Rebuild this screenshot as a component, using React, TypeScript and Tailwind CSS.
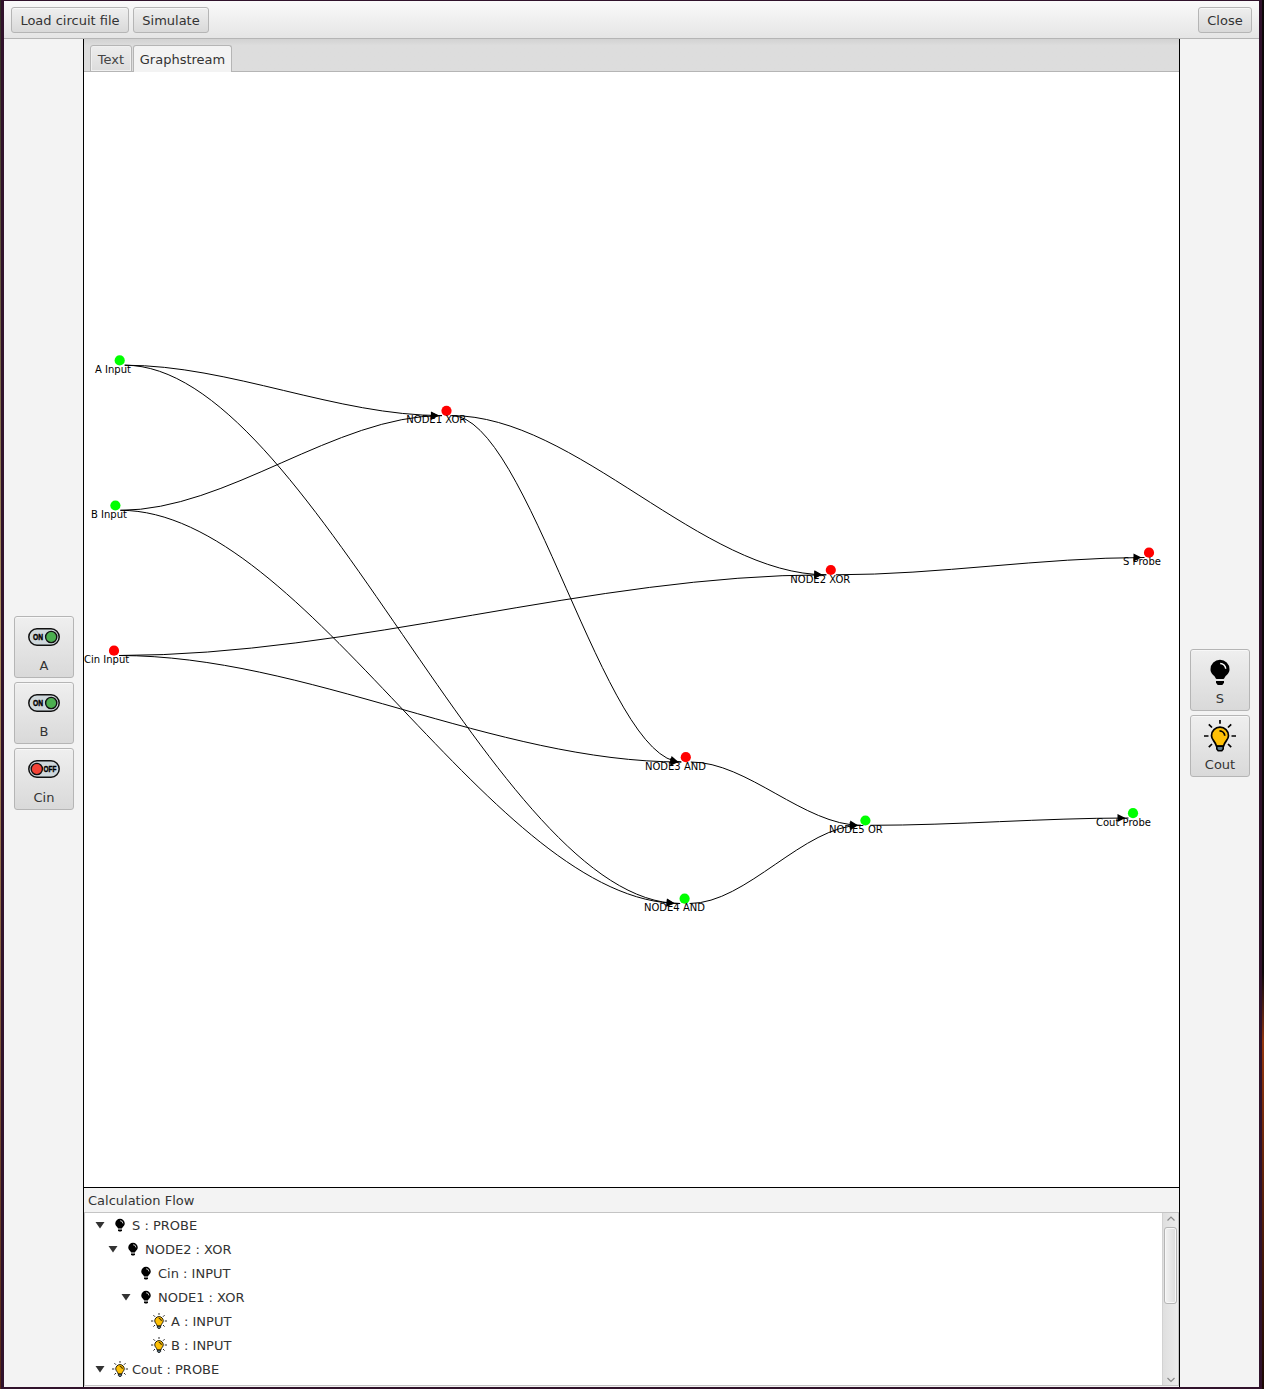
import React from "react";

type GraphNode = { id: string; label: string; x: number; y: number; tx: number; ty: number; on: boolean; gap?: number };

const nodes: GraphNode[] = [
  { id: "A", label: "A Input", x: 119.7, y: 360.4, tx: 95, ty: 373, on: true },
  { id: "B", label: "B Input", x: 115.4, y: 505.5, tx: 91, ty: 518, on: true },
  { id: "Cin", label: "Cin Input", x: 114, y: 650.7, tx: 84, ty: 663, on: false },
  { id: "N1", label: "NODE1 XOR", x: 446.5, y: 410.8, tx: 406.3, ty: 423, on: false },
  { id: "N2", label: "NODE2 XOR", x: 830.8, y: 570, tx: 790.3, ty: 583, on: false, gap: 4 },
  { id: "N3", label: "NODE3 AND", x: 685.8, y: 757.2, tx: 645, ty: 770, on: false },
  { id: "N4", label: "NODE4 AND", x: 684.6, y: 898.7, tx: 644, ty: 911, on: true, gap: 5.5 },
  { id: "N5", label: "NODE5 OR", x: 865.4, y: 820.5, tx: 829, ty: 833, on: true },
  { id: "S", label: "S Probe", x: 1149, y: 552.7, tx: 1123, ty: 565, on: false },
  { id: "Cout", label: "Cout Probe", x: 1133, y: 813.2, tx: 1096, ty: 826, on: true },
];

const edges: [string, string][] = [
  ["A", "N1"], ["B", "N1"], ["A", "N4"], ["B", "N4"], ["Cin", "N2"], ["Cin", "N3"],
  ["N1", "N2"], ["N1", "N3"], ["N2", "S"], ["N3", "N5"], ["N4", "N5"], ["N5", "Cout"],
];

function Edge({ from, to }: { from: GraphNode; to: GraphNode }) {
  const x0 = from.x + 5, y0 = from.y + 4.8;
  const x1 = to.x - 4.5, y1 = to.y + 4.8;
  const third = (x1 - x0) / 3;
  const tipX = x1 - (to.gap ?? 3);
  // Height of the curve at a given x, since x grows linearly along it.
  const at = (x: number) => {
    const t = (x - x0) / (x1 - x0);
    return y0 + (y1 - y0) * (3 * t * t - 2 * t * t * t);
  };
  const tipY = at(tipX);
  const angle = (Math.atan2(tipY - at(tipX - 8), 8) * 180) / Math.PI;
  return (
    <g>
      <path d={`M${x0} ${y0}C${x0 + third} ${y0} ${x1 - third} ${y1} ${x1} ${y1}`} fill="none" stroke="#000" strokeWidth="1" />
      <path d="M0 0L-8 -4V4Z" transform={`translate(${tipX} ${tipY}) rotate(${angle})`} />
    </g>
  );
}

function Graph() {
  const find = (id: string) => nodes.find((n) => n.id === id)!;
  return (
    <svg className="block h-[1115px] w-[1095px] bg-white" viewBox="84 72 1095 1115">
      {edges.map(([a, b]) => <Edge key={a + b} from={find(a)} to={find(b)} />)}
      {nodes.map((n) => <circle key={n.id} cx={n.x} cy={n.y} r="5.1" fill={n.on ? "#00ff00" : "#ff0000"} />)}
      {nodes.map((n) => <text key={n.id} x={n.tx} y={n.ty} className="text-[10px]">{n.label}</text>)}
    </svg>
  );
}

function Bulb({ on, className }: { on: boolean; className: string }) {
  return (
    <svg viewBox="0 0 32 32" className={className}>
      {on ? (
        <>
          <path d="M16 0v3.800M4.800 4.300l3.200 3.200M27.200 4.300l-3.200 3.200M0 16h4.500M27.500 16H32M4.800 27.200l3.200-3.200M27.200 27.200l-3.200-3.200" stroke="#000" strokeWidth="1.700" />
          <path d="M16 7.200a8.500 8.500 0 0 0-8.500 8.500c0 4.200 3.800 5.500 4.900 10.300h7.200c1.100-4.800 4.900-6.100 4.900-10.300A8.500 8.500 0 0 0 16 7.200Z" fill="#ffc107" stroke="#000" strokeWidth="1.700" />
          <path d="M15.500 10.800a5.400 5.400 0 0 1 5.300 5" fill="none" stroke="#000" strokeWidth="1.700" />
          <path d="M12.800 26.300h6.400v2.700l-1.400 1.800h-3.600l-1.400-1.800Z" fill="#607d8b" stroke="#000" strokeWidth="1.600" />
        </>
      ) : (
        <>
          <path d="M16 3.700a9.500 9.500 0 0 0-9.500 9.500c0 4 2.700 5.500 4.200 7.200 1 1.200.9 2.600 2 2.600h6.600c1.100 0 1-1.400 2-2.600 1.500-1.700 4.200-3.200 4.200-7.200A9.500 9.500 0 0 0 16 3.700Z" />
          <path d="M16.200 7.500a5.500 5.500 0 0 1 5.500 5.300" fill="none" stroke="#fff" strokeWidth="1.500" />
          <path d="M12 25h8v1.800l-1.700 2.200h-4.600L12 26.800Z" />
        </>
      )}
    </svg>
  );
}

function Toggle({ on }: { on: boolean }) {
  return (
    <svg viewBox="0 0 32 32" className="size-8">
      <rect x=".8" y="7.800" width="30.400" height="16.400" rx="8.200" fill="#cfd8dc" stroke="#111" strokeWidth="1.500" />
      <circle cx={on ? 23.2 : 8.8} cy="16" r="5.600" fill={on ? "#4caf50" : "#f44336"} stroke="#111" strokeWidth="1.400" />
      <text x={on ? 5 : 15.5} y="19.400" textLength={on ? 10 : 12.8} lengthAdjust="spacingAndGlyphs" stroke="#000" strokeWidth=".5" className="text-[9.500px] font-bold [font-family:'Liberation_Sans',sans-serif]">
        {on ? "ON" : "OFF"}
      </text>
    </svg>
  );
}

const face = "rounded-[3px] border border-[#b5b5b5] bg-linear-to-b from-[#efefef] to-[#d9d9d9] shadow-[inset_0_1px_#f8f8f8]";

function BarButton({ children, className }: { children: React.ReactNode; className: string }) {
  return <button className={`flex h-[26px] items-center justify-center pt-0.5 whitespace-nowrap ${face} ${className}`}>{children}</button>;
}

function SideButton({ label, children }: { label: string; children: React.ReactNode }) {
  return (
    <button className={`flex h-[62px] w-[60px] flex-col items-center pt-1 ${face}`}>
      {children}
      <span className="mt-1 leading-[17px]">{label}</span>
    </button>
  );
}

const rows: { text: string; depth: number; on: boolean; open: boolean }[] = [
  { text: "S : PROBE", depth: 0, on: false, open: true },
  { text: "NODE2 : XOR", depth: 1, on: false, open: true },
  { text: "Cin : INPUT", depth: 2, on: false, open: false },
  { text: "NODE1 : XOR", depth: 2, on: false, open: true },
  { text: "A : INPUT", depth: 3, on: true, open: false },
  { text: "B : INPUT", depth: 3, on: true, open: false },
  { text: "Cout : PROBE", depth: 0, on: true, open: true },
  { text: "", depth: 1, on: true, open: true },
];

function Tree() {
  return (
    <div className="flex h-[174px] border border-[#c4c4c4] bg-white">
      <div className="flex-1 overflow-hidden">
        {rows.map((r, i) => (
          <div key={i} className="flex h-6 items-center" style={{ paddingLeft: 10 + r.depth * 13 }}>
            <svg viewBox="0 0 10 8" className="h-2 w-[10px]">{r.open && <path d="M.5 1h9L5 7.500Z" fill="#333" />}</svg>
            <Bulb on={r.on} className="ml-[7px] size-4" />
            <span className="mt-0.5 ml-1 whitespace-nowrap">{r.text}</span>
          </div>
        ))}
      </div>
      <div className="flex w-4 flex-col items-center border-l border-[#d2d2d2] bg-linear-to-r from-[#dfdfdf] to-[#ececec]">
        <svg viewBox="0 0 10 14" className="h-[14px] w-[10px] shrink-0"><path d="M1.500 7.500L5 4l3.500 3.500" fill="none" stroke="#888" strokeWidth="1.200" /></svg>
        <div className="h-[77px] w-[13px] shrink-0 rounded-[3px] border border-[#b5b5b5] bg-linear-to-r from-[#f2f2f2] to-[#dcdcdc] shadow-[inset_0_0_0_1px_#f7f7f7]" />
        <div className="flex-1" />
        <svg viewBox="0 0 10 14" className="h-[14px] w-[10px] shrink-0"><path d="M1.500 7L5 10.500L8.500 7" fill="none" stroke="#888" strokeWidth="1.200" /></svg>
      </div>
    </div>
  );
}

export default function App() {
  return (
    <div className="flex h-[1389px] w-[1264px] overflow-hidden bg-[#30122b] pt-px pb-0.5 text-[13px] text-[#333] [font-family:'DejaVu_Sans',sans-serif]">
      <div className="-mt-px -mb-0.5 w-px shrink-0 bg-linear-to-b from-[#302b24] via-[#b09060] via-45% to-[#552517]" />
      <div className="ml-[3px] flex w-[1255px] shrink-0 flex-col bg-[#f3f3f3]">
        <header className="flex h-[38px] shrink-0 items-center gap-1 border-b border-[#b5b5b5] bg-linear-to-b from-[#fafafa] to-[#e5e5e5] px-[7px]">
          <BarButton className="w-[118px]">Load circuit file</BarButton>
          <BarButton className="w-[76px]">Simulate</BarButton>
          <BarButton className="ml-auto w-[54px]">Close</BarButton>
        </header>
        <div className="flex flex-1">
          <aside className="flex w-[79px] flex-col items-center justify-center gap-1 pl-px">
            <SideButton label="A"><Toggle on /></SideButton>
            <SideButton label="B"><Toggle on /></SideButton>
            <SideButton label="Cin"><Toggle on={false} /></SideButton>
          </aside>
          <main className="flex w-[1097px] flex-col border-x border-black">
            <div className="flex h-[33px] bg-linear-to-b from-[#d2d2d2] to-[#dddddd] to-20% shadow-[inset_0_-1px_#b5b5b5]">
              <div className="mt-[6px] ml-[6px] flex h-[27px] w-[42px] items-center justify-center rounded-t-[3px] border border-[#b5b5b5] bg-linear-to-b from-[#ededed] to-[#dcdcdc] pt-0.5 text-[#444] shadow-[inset_0_0_0_1px_#f0f0f0]">Text</div>
              <div className="mt-[6px] ml-px flex h-[27px] w-[99px] items-center justify-center rounded-t-[3px] border border-b-0 border-[#b5b5b5] bg-[#f3f3f3] pt-px">Graphstream</div>
            </div>
            <Graph />
            <div className="h-[25px] border-t border-black pl-1 leading-[26px]">Calculation Flow</div>
            <Tree />
          </main>
          <aside className="flex w-[79px] flex-col items-center justify-center gap-1 pl-px">
            <SideButton label="S"><Bulb on={false} className="mt-0.5 -mb-0.5 size-8" /></SideButton>
            <SideButton label="Cout"><Bulb on className="size-8" /></SideButton>
          </aside>
        </div>
      </div>
      <div className="-mt-px -mb-0.5 ml-[3px] w-0.5 bg-linear-to-b from-[#0d0708] from-70% via-[#92350d] via-75% to-[#1b0803]" />
    </div>
  );
}
